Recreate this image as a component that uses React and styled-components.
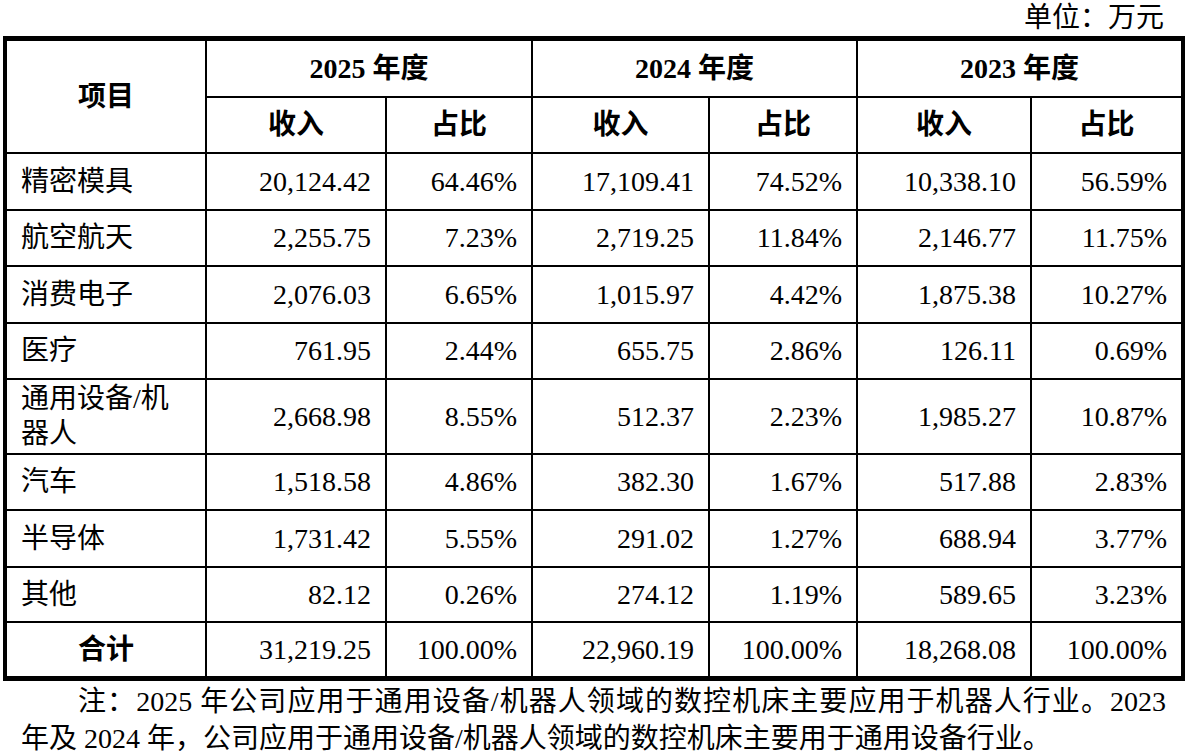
import React from 'react';
import styled, { createGlobalStyle } from 'styled-components';

const GlobalStyle = createGlobalStyle`
  html, body {
    margin: 0;
    padding: 0;
    background: #fff;
  }
  body {
    font-family: "Liberation Serif", "Noto Sans CJK SC", serif;
    color: #000;
  }
`;

const Page = styled.div`
  width: 1186px;
  padding: 0 0 0 3px;
  box-sizing: border-box;
`;

const Unit = styled.div`
  height: 36px;
  line-height: 36px;
  font-size: 28px;
  text-align: right;
  padding-right: 22px;
`;

const Table = styled.table`
  width: 1178px;
  table-layout: fixed;
  border-collapse: collapse;
  border-top: 5px solid #000;
  border-left: 4px solid #000;
  border-right: 4px solid #000;
  border-bottom: 5px solid #000;
  font-size: 28px;
`;

const Row = styled.tr`
  height: ${(p) => p.h}px;
`;

const Cell = styled.td`
  border: 2px solid #000;
  padding: 0 14px;
  vertical-align: middle;
  line-height: 35px;
  text-align: ${(p) => p.align || 'right'};
  font-weight: ${(p) => (p.bold ? 700 : 400)};
  white-space: ${(p) => (p.wrap ? 'normal' : 'nowrap')};
`;

const HeadCell = styled.th`
  border: 2px solid #000;
  padding: 0;
  vertical-align: middle;
  text-align: center;
  font-weight: 700;
  line-height: 35px;
`;

const Note = styled.div`
  margin: 3px 0 0 18px;
  width: 1145px;
  font-size: 28px;
  line-height: 36.5px;
`;

const NoteLine = styled.div`
  text-align: ${(p) => (p.first ? 'justify' : 'left')};
  text-align-last: ${(p) => (p.first ? 'justify' : 'left')};
  text-indent: ${(p) => (p.first ? '57px' : '0')};
  white-space: nowrap;
`;

const rows = [
  ['精密模具', '20,124.42', '64.46%', '17,109.41', '74.52%', '10,338.10', '56.59%', 57],
  ['航空航天', '2,255.75', '7.23%', '2,719.25', '11.84%', '2,146.77', '11.75%', 56],
  ['消费电子', '2,076.03', '6.65%', '1,015.97', '4.42%', '1,875.38', '10.27%', 57],
  ['医疗', '761.95', '2.44%', '655.75', '2.86%', '126.11', '0.69%', 56],
  ['通用设备/机器人', '2,668.98', '8.55%', '512.37', '2.23%', '1,985.27', '10.87%', 75],
  ['汽车', '1,518.58', '4.86%', '382.30', '1.67%', '517.88', '2.83%', 56],
  ['半导体', '1,731.42', '5.55%', '291.02', '1.27%', '688.94', '3.77%', 57],
  ['其他', '82.12', '0.26%', '274.12', '1.19%', '589.65', '3.23%', 55],
];

const total = ['合计', '31,219.25', '100.00%', '22,960.19', '100.00%', '18,268.08', '100.00%'];

const widths = [201, 180, 146, 177, 148, 174, 152];

export default function App() {
  return (
    <Page>
      <GlobalStyle />
      <Unit>单位：万元</Unit>
      <Table>
        <colgroup>
          {widths.map((w, i) => (
            <col key={i} style={{ width: w }} />
          ))}
        </colgroup>
        <thead>
          <Row h={58}>
            <HeadCell rowSpan={2}>项目</HeadCell>
            <HeadCell colSpan={2}>2025 年度</HeadCell>
            <HeadCell colSpan={2}>2024 年度</HeadCell>
            <HeadCell colSpan={2}>2023 年度</HeadCell>
          </Row>
          <Row h={56}>
            <HeadCell>收入</HeadCell>
            <HeadCell>占比</HeadCell>
            <HeadCell>收入</HeadCell>
            <HeadCell>占比</HeadCell>
            <HeadCell>收入</HeadCell>
            <HeadCell>占比</HeadCell>
          </Row>
        </thead>
        <tbody>
          {rows.map((r) => (
            <Row key={r[0]} h={r[7]}>
              <Cell align="left" wrap>
                {r[0]}
              </Cell>
              {r.slice(1, 7).map((v, i) => (
                <Cell key={i}>{v}</Cell>
              ))}
            </Row>
          ))}
          <Row h={57}>
            <Cell align="center" bold>
              {total[0]}
            </Cell>
            {total.slice(1).map((v, i) => (
              <Cell key={i}>{v}</Cell>
            ))}
          </Row>
        </tbody>
      </Table>
      <Note>
        <NoteLine first>注：2025 年公司应用于通用设备/机器人领域的数控机床主要应用于机器人行业。2023</NoteLine>
        <NoteLine>年及 2024 年，公司应用于通用设备/机器人领域的数控机床主要用于通用设备行业。</NoteLine>
      </Note>
    </Page>
  );
}
